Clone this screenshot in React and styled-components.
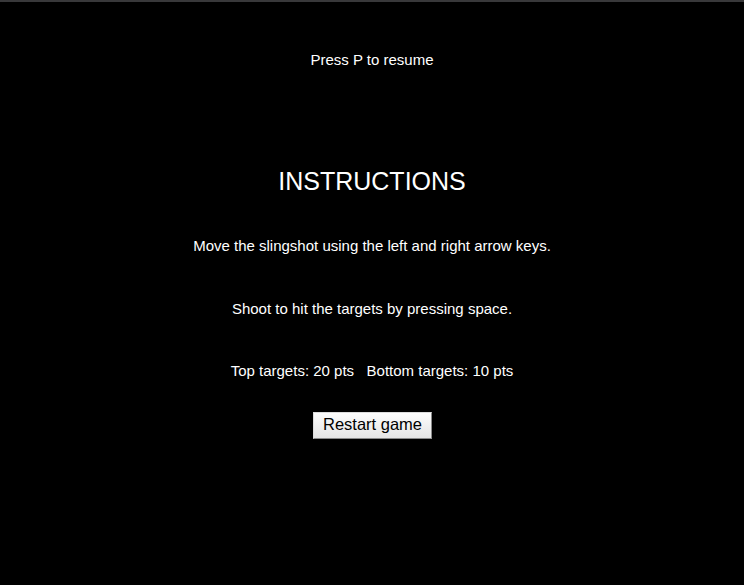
import React from 'react';
import styled, { createGlobalStyle } from 'styled-components';

const GlobalStyle = createGlobalStyle`
  html, body {
    margin: 0;
    padding: 0;
    background: #000;
    height: 100%;
  }
  #root {
    height: 100%;
  }
`;

const Screen = styled.div`
  height: 100%;
  box-sizing: border-box;
  border-top: 2px solid #38383a;
  background: #000;
  color: #fff;
  font-family: 'Liberation Sans', Arial, sans-serif;
  font-size: 15px;
  display: flex;
  flex-direction: column;
  align-items: center;
  text-align: center;
`;

const Hint = styled.p`
  margin: 49px 0 0;
  line-height: 17px;
`;

const Title = styled.h1`
  margin: 99px 0 0;
  font-size: 25px;
  font-weight: normal;
  line-height: 28px;
`;

const Line = styled.p`
  margin: ${({ gap }) => gap}px 0 0;
  line-height: 17px;
`;

const Button = styled.button`
  margin: 33px 0 0 1px;
  width: 119px;
  height: 27px;
  padding: 0 0 2px;
  font-family: 'Liberation Sans', Arial, sans-serif;
  font-size: 16.5px;
  color: #000;
  background: linear-gradient(#fdfdfd, #e4e4e4);
  border: 1px solid #dcdcdc;
  border-right-color: #8a8a8a;
  border-bottom-color: #8a8a8a;
  border-radius: 0;
  cursor: pointer;
`;

export default function App() {
  return (
    <>
      <GlobalStyle />
      <Screen>
        <Hint>Press P to resume</Hint>
        <Title>INSTRUCTIONS</Title>
        <Line gap={42}>Move the slingshot using the left and right arrow keys.</Line>
        <Line gap={46}>Shoot to hit the targets by pressing space.</Line>
        <Line gap={45}>Top targets: 20 pts&nbsp;&nbsp; Bottom targets: 10 pts</Line>
        <Button>Restart game</Button>
      </Screen>
    </>
  );
}
